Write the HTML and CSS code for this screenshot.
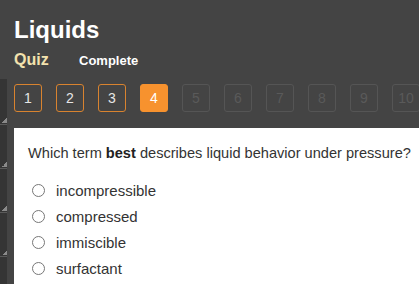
FILE: index.html
```html
<!DOCTYPE html>
<html>
<head>
<meta charset="utf-8">
<link rel="stylesheet" href="styles.css">
</head>
<body>
<header class="header">
  <h1 class="title">Liquids</h1>
  <div class="subtitle">
    <span class="quiz">Quiz</span>
    <span class="status">Complete</span>
  </div>
</header>
<div class="main">
  <div class="strip">
    <div class="seg"></div>
    <div class="seg"></div>
    <div class="seg"></div>
    <div class="seg"></div>
  </div>
  <div class="content">
    <nav class="pager">
      <span class="pg done">1</span>
      <span class="pg done">2</span>
      <span class="pg done">3</span>
      <span class="pg current">4</span>
      <span class="pg off">5</span>
      <span class="pg off">6</span>
      <span class="pg off">7</span>
      <span class="pg off">8</span>
      <span class="pg off">9</span>
      <span class="pg off">10</span>
    </nav>
    <section class="panel">
      <p class="question">Which term <b>best</b> describes liquid behavior under pressure?</p>
      <ul class="options">
        <li class="opt"><span class="radio"></span>incompressible</li>
        <li class="opt"><span class="radio"></span>compressed</li>
        <li class="opt"><span class="radio"></span>immiscible</li>
        <li class="opt"><span class="radio"></span>surfactant</li>
      </ul>
    </section>
  </div>
</div>
</body>
</html>
```

FILE: styles.css
```css
html, body {
  margin: 0;
  padding: 0;
  height: 100%;
  overflow: hidden;
}
body {
  background: #444444;
  font-family: "Liberation Sans", Arial, sans-serif;
  display: flex;
  flex-direction: column;
}
.header {
  padding: 16px 0 0 14px;
  height: 63px;
}
.title {
  margin: 0;
  font-size: 24px;
  line-height: 28px;
  font-weight: bold;
  color: #ffffff;
}
.subtitle {
  margin-top: 6px;
  display: flex;
  align-items: baseline;
  line-height: 20px;
}
.quiz {
  font-size: 16px;
  font-weight: bold;
  color: #f3e2ae;
  width: 65px;
}
.status {
  font-size: 13px;
  font-weight: bold;
  color: #ffffff;
}
.main {
  flex: 1;
  display: flex;
  min-height: 0;
}
.strip {
  width: 7px;
  background: #353535;
  display: flex;
  flex-direction: column;
}
.seg {
  height: 44px;
  border-bottom: 1px solid #5a5a5a;
  background:
    linear-gradient(135deg, transparent 50%, #8a8a8a 50%) right 0 bottom 1px / 5px 5px no-repeat;
  box-sizing: border-box;
}
.seg:first-child {
  height: 46px;
}
.content {
  flex: 1;
  padding: 5px 0 0 7px;
  display: flex;
  flex-direction: column;
  min-width: 0;
}
.pager {
  display: flex;
  gap: 14px;
  height: 28px;
  margin-bottom: 16px;
  white-space: nowrap;
}
.pg {
  flex: 0 0 auto;
  box-sizing: border-box;
  width: 28px;
  height: 28px;
  border: 1px solid #555555;
  border-radius: 3px;
  display: flex;
  align-items: center;
  justify-content: center;
  font-size: 14px;
  color: #5a5a5a;
}
.pg.done {
  border-color: #d8832f;
  color: #e6e6e6;
}
.pg.current {
  background: #f7922e;
  border-color: #f7922e;
  color: #ffffff;
}
.panel {
  flex: 1;
  background: #ffffff;
  padding: 17px 0 0 14px;
}
.question {
  margin: 0;
  font-size: 14.6px;
  line-height: 17px;
  color: #333333;
  white-space: nowrap;
}
.question b {
  color: #222222;
}
.options {
  list-style: none;
  margin: 15px 0 0 0;
  padding: 0;
}
.opt {
  display: flex;
  align-items: center;
  height: 26px;
  font-size: 15px;
  color: #333333;
}
.radio {
  box-sizing: border-box;
  width: 13px;
  height: 13px;
  border: 1px solid #777777;
  border-radius: 50%;
  background: #ffffff;
  margin: 0 11px 0 4px;
}
```
